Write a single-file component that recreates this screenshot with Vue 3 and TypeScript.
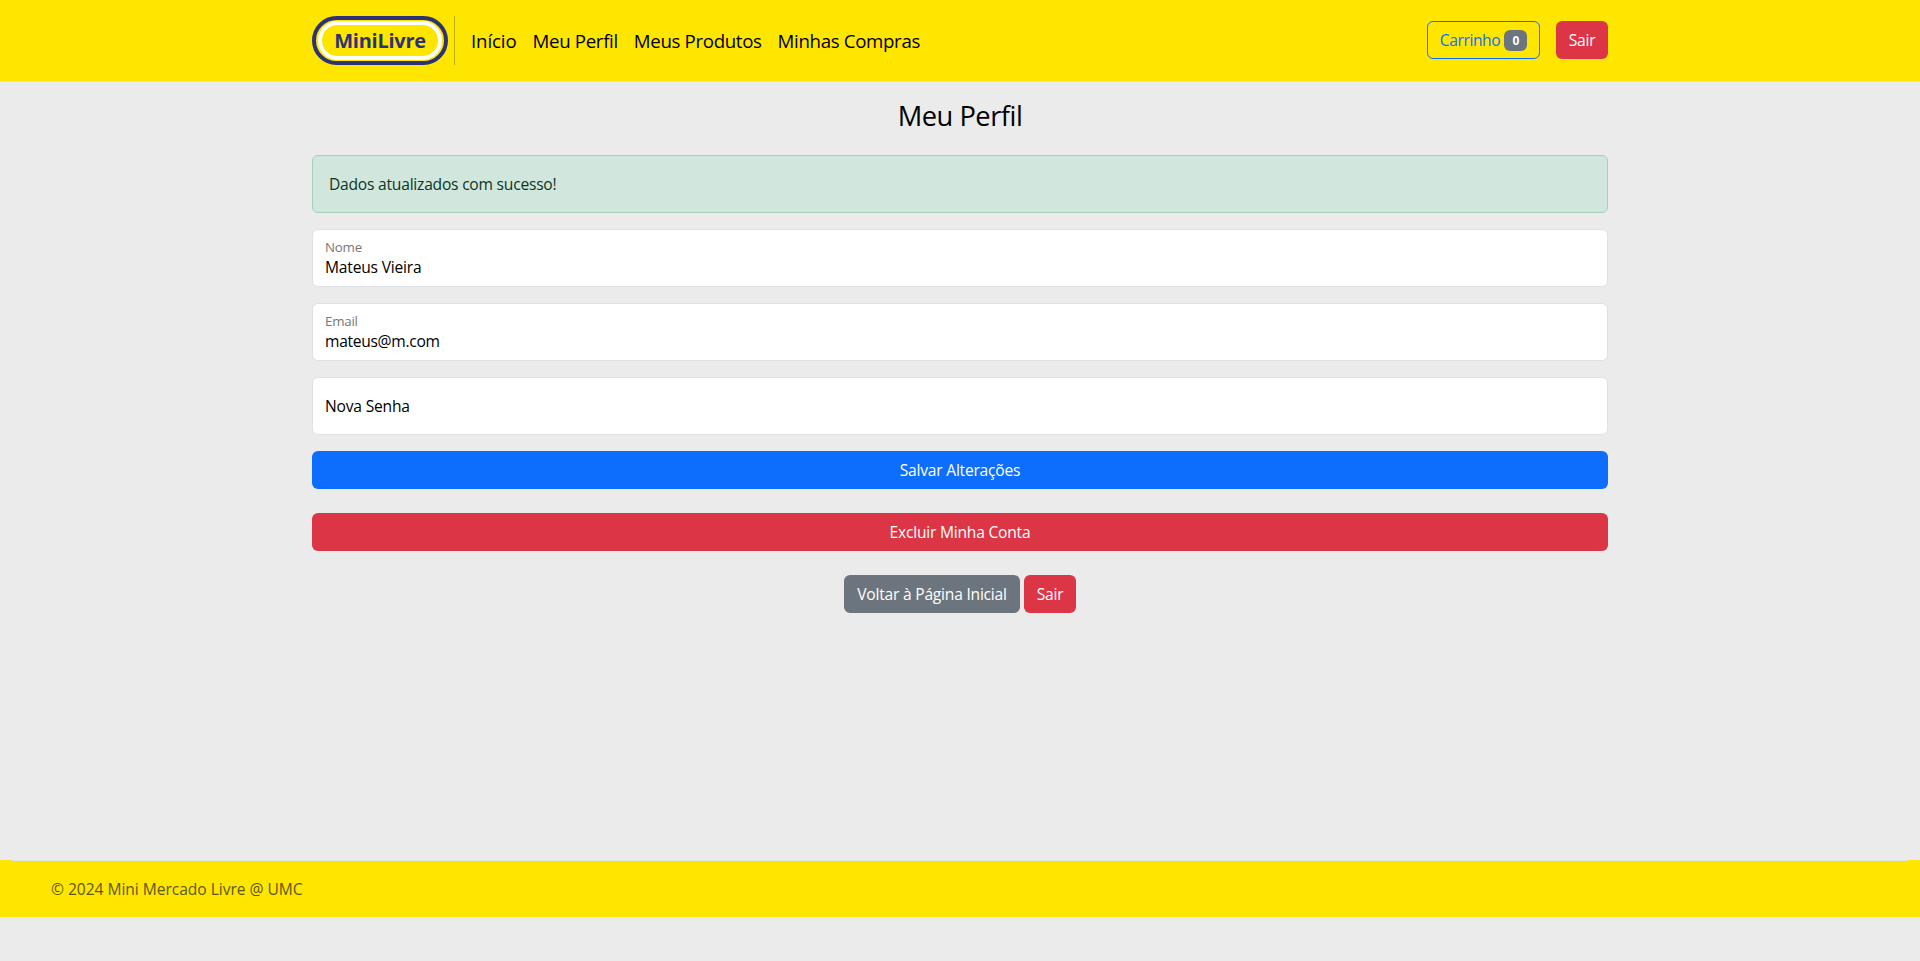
<script setup lang="ts">
import { ref } from 'vue'

interface NavLink {
  label: string
  tone: string
}

const links: NavLink[] = [
  { label: 'Início', tone: 'loose' },
  { label: 'Meu Perfil', tone: 'tight' },
  { label: 'Meus Produtos', tone: 'tight' },
  { label: 'Minhas Compras', tone: 'tight' },
]

const cartCount = ref(0)
const nome = ref('Mateus Vieira')
const email = ref('mateus@m.com')
const senha = ref('')
</script>

<template>
  <div class="page">
    <header class="header">
      <div class="container bar">
        <a class="logo"><span class="logo-inner">MiniLivre</span></a>
        <div class="divider"></div>
        <nav class="nav">
          <a v-for="link in links" :key="link.label" :class="link.tone">{{ link.label }}</a>
        </nav>
        <div class="actions">
          <button class="btn cart" type="button">
            <span class="cart-label">Carrinho</span><span class="badge">{{ cartCount }}</span>
          </button>
          <button class="btn danger small" type="button">Sair</button>
        </div>
      </div>
    </header>

    <main class="container main">
      <h1 class="title">Meu Perfil</h1>
      <div class="alert">Dados atualizados com sucesso!</div>
      <form class="form" @submit.prevent>
        <label class="field">
          <span class="caption">Nome</span>
          <input v-model="nome" class="input name" type="text" />
        </label>
        <label class="field">
          <span class="caption">Email</span>
          <input v-model="email" class="input mail" type="email" />
        </label>
        <label class="field">
          <input v-model="senha" class="input name" type="password" placeholder="Nova Senha" />
        </label>
        <button class="btn primary" type="submit">Salvar Alterações</button>
      </form>
      <button class="btn danger remove" type="button">Excluir Minha Conta</button>
      <div class="links">
        <button class="btn secondary" type="button">Voltar à Página Inicial</button>
        <button class="btn danger small" type="button">Sair</button>
      </div>
    </main>

    <footer class="footer">
      <div class="footer-inner">© 2024 Mini Mercado Livre @ UMC</div>
    </footer>
  </div>
</template>

<style>
body {
  margin: 0;
  background: #ebebeb;
}
</style>

<style scoped>
.page,
.page * {
  box-sizing: border-box;
}
.page {
  display: flex;
  flex-direction: column;
  height: 917px;
  background: #ebebeb;
  color: #000;
  font-family: 'Open Sans', 'Noto Sans', sans-serif;
  font-size: 15.6px;
  line-height: 24px;
  letter-spacing: -0.22px;
}
.container {
  width: 1296px;
  margin: 0 auto;
}
.header {
  height: 82px;
  background: #ffe600;
  border-bottom: 1px solid #dee2e6;
}
.bar {
  display: flex;
  align-items: center;
  height: 81px;
}
.logo {
  width: 136px;
  height: 49px;
  padding: 1px 2px;
  border: 4px solid #2d3277;
  border-radius: 25px;
}
.logo-inner {
  display: flex;
  align-items: center;
  justify-content: center;
  height: 39px;
  padding-top: 1px;
  border: 4px solid #fff;
  border-radius: 20px;
  color: #2d3277;
  font-size: 20px;
  font-weight: 700;
  letter-spacing: -0.25px;
}
.divider {
  width: 1px;
  height: 49px;
  margin: 0 16px 0 6px;
  background: #bfae0f;
}
.nav {
  display: flex;
  gap: 16px;
  padding-top: 1px;
  font-size: 18.7px;
  line-height: 28px;
}
.tight {
  letter-spacing: -0.35px;
}
.loose {
  letter-spacing: -0.12px;
}
.actions {
  display: flex;
  gap: 16px;
  margin: 0 0 1px auto;
}
.btn {
  display: flex;
  align-items: center;
  justify-content: center;
  height: 38px;
  padding: 0;
  border: 0;
  border-radius: 6px;
  color: #fff;
  font: inherit;
  letter-spacing: inherit;
}
.cart {
  gap: 4px;
  width: 113px;
  border: 1px solid #0d6efd;
  background: transparent;
  color: #0d6efd;
}
.cart-label {
  letter-spacing: -0.4px;
}
.badge {
  width: 23px;
  height: 21px;
  border-radius: 6px;
  background: #6c757d;
  color: #fff;
  font-size: 12px;
  font-weight: 700;
  line-height: 21px;
  text-align: center;
}
.small {
  width: 52px;
}
.danger {
  background: #dc3545;
}
.primary {
  background: #0d6efd;
}
.secondary {
  width: 176px;
  background: #6c757d;
}
.main {
  display: flex;
  flex: 1;
  flex-direction: column;
}
.title {
  margin: 17px 0 22px;
  font-size: 27.3px;
  font-weight: 400;
  line-height: 34px;
  letter-spacing: -0.5px;
  text-align: center;
}
.alert {
  height: 58px;
  margin-bottom: 16px;
  padding: 16px;
  border: 1px solid #a3cfbb;
  border-radius: 6px;
  background: #d1e7dd;
  color: #0a3622;
}
.form {
  display: grid;
  gap: 16px;
}
.field {
  display: flex;
  flex-direction: column;
  justify-content: center;
  height: 58px;
  padding: 0 12px;
  border: 1px solid #dee2e6;
  border-radius: 6px;
  background: #fff;
}
.caption {
  height: 18px;
  padding-top: 1px;
  color: #777;
  font-size: 13.3px;
  line-height: 18px;
}
.input {
  width: 100%;
  height: 24px;
  padding: 0;
  border: 0;
  outline: 0;
  background: transparent;
  color: #000;
  font: inherit;
  letter-spacing: inherit;
}
.input.name {
  letter-spacing: -0.2px;
}
.input.mail {
  letter-spacing: -0.3px;
}
.input::placeholder {
  color: #000;
  opacity: 1;
}
.remove {
  margin-top: 24px;
}
.links {
  display: flex;
  gap: 4px;
  justify-content: center;
  margin-top: 24px;
}
.footer {
  height: 57px;
  padding: 0 12px;
  background: #ffe600;
}
.footer-inner {
  padding: 16px 39px;
  border-top: 1px solid #dee2e6;
  color: #5e5816;
  letter-spacing: -0.04px;
}
</style>
